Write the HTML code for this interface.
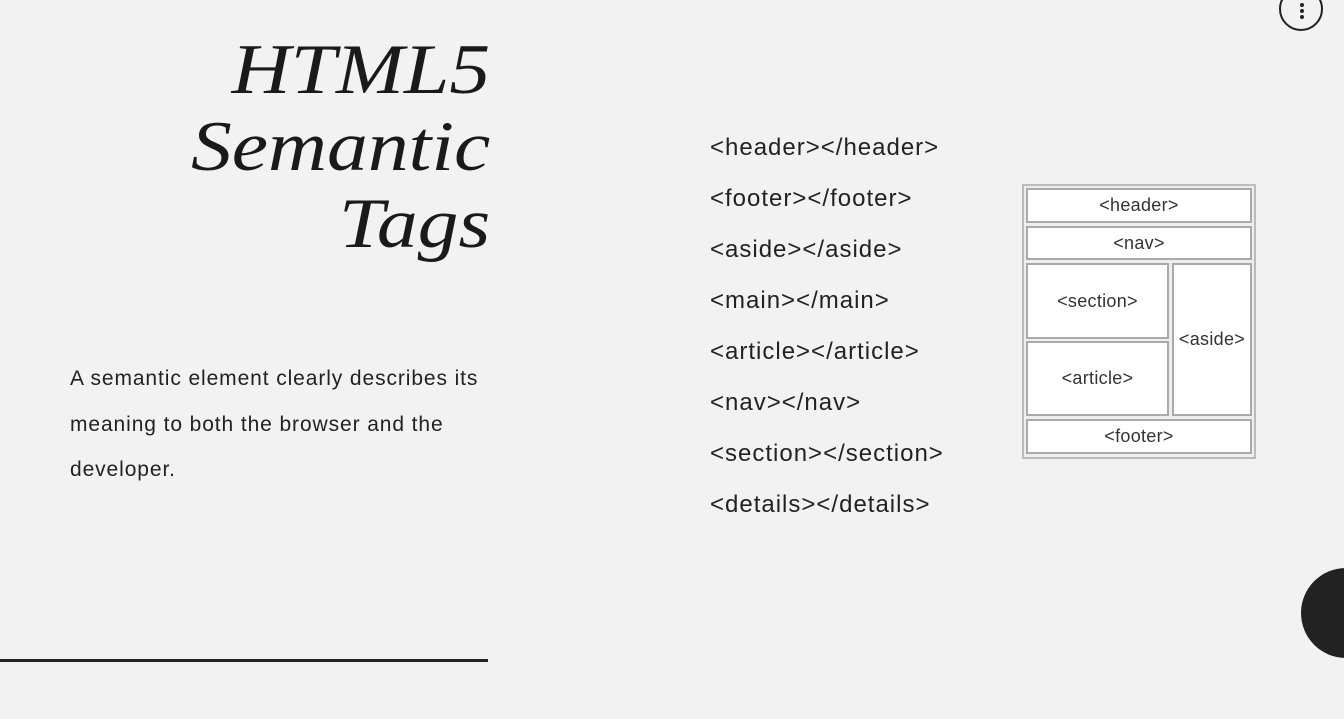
<!DOCTYPE html>
<html><head><style>
body{margin:0;width:1344px;height:719px;background:#f2f2f2;position:relative;overflow:hidden;font-family:"Liberation Sans",sans-serif;color:#222}
.t{position:absolute;right:854px;top:32px;text-align:right;font-family:"Liberation Serif",serif;font-style:italic;font-size:71px;line-height:77px;color:#1a1a1a;transform:scaleX(1.15);transform-origin:right top}
.p{position:absolute;left:70px;top:356px;font-size:21px;letter-spacing:0.9px;line-height:45.5px;width:460px;color:#222}
.l{position:absolute;left:710px;top:122px;font-size:24px;letter-spacing:1px;line-height:51px;color:#222}
.b{position:absolute;box-sizing:border-box;border:2px solid #aaa;background:#fff;font-size:18px;letter-spacing:0.3px;color:#333;display:flex;align-items:center;justify-content:center}
</style></head><body>
<div class="t">HTML5<br>Semantic<br>Tags</div>
<div class="p">A semantic element clearly describes its meaning to both the browser and the developer.</div>
<div style="position:absolute;left:0;top:659px;width:488px;height:3px;background:#222"></div>
<div class="l">&lt;header&gt;&lt;/header&gt;<br>&lt;footer&gt;&lt;/footer&gt;<br>&lt;aside&gt;&lt;/aside&gt;<br>&lt;main&gt;&lt;/main&gt;<br>&lt;article&gt;&lt;/article&gt;<br>&lt;nav&gt;&lt;/nav&gt;<br>&lt;section&gt;&lt;/section&gt;<br>&lt;details&gt;&lt;/details&gt;</div>
<div style="position:absolute;left:1022px;top:184px;width:234px;height:275px;box-sizing:border-box;border:2px solid #bbb;background:#eee"></div>
<div class="b" style="left:1026px;top:188px;width:226px;height:35px">&lt;header&gt;</div>
<div class="b" style="left:1026px;top:226px;width:226px;height:34px">&lt;nav&gt;</div>
<div class="b" style="left:1026px;top:263px;width:143px;height:76px">&lt;section&gt;</div>
<div class="b" style="left:1026px;top:341px;width:143px;height:75px">&lt;article&gt;</div>
<div class="b" style="left:1172px;top:263px;width:80px;height:153px">&lt;aside&gt;</div>
<div class="b" style="left:1026px;top:419px;width:226px;height:35px">&lt;footer&gt;</div>
<div style="position:absolute;left:1279px;top:-13px;width:40px;height:40px;border:2px solid #222;border-radius:50%"></div>
<div style="position:absolute;left:1300px;top:3px;width:4px;height:4px;background:#222;border-radius:50%;box-shadow:0 6px #222,0 12px #222"></div>
<div style="position:absolute;left:1301px;top:568px;width:90px;height:90px;background:#222;border-radius:50%"></div>
</body></html>
